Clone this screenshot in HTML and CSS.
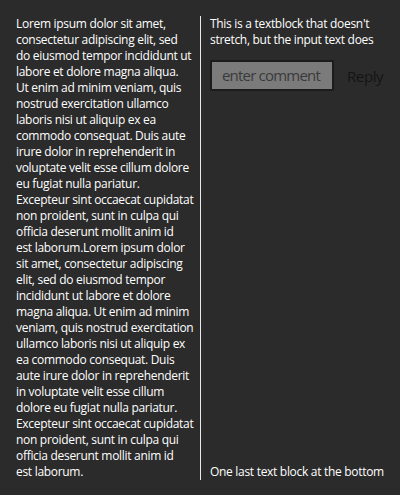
FILE: index.html
```html
<!DOCTYPE html>
<html>
<head>
<meta charset="utf-8">
<link rel="stylesheet" href="styles.css">
</head>
<body>
<div class="page">
  <div class="left">
    <p class="body-text lines">Lorem ipsum dolor sit amet,<br>consectetur adipiscing elit, sed<br>do eiusmod tempor incididunt ut<br>labore et dolore magna aliqua.<br>Ut enim ad minim veniam, quis<br>nostrud exercitation ullamco<br>laboris nisi ut aliquip ex ea<br>commodo consequat. Duis aute<br>irure dolor in reprehenderit in<br>voluptate velit esse cillum dolore<br>eu fugiat nulla pariatur.<br>Excepteur sint occaecat cupidatat<br>non proident, sunt in culpa qui<br>officia deserunt mollit anim id<br>est laborum.Lorem ipsum dolor<br>sit amet, consectetur adipiscing<br>elit, sed do eiusmod tempor<br>incididunt ut labore et dolore<br>magna aliqua. Ut enim ad minim<br>veniam, quis nostrud exercitation<br>ullamco laboris nisi ut aliquip ex<br>ea commodo consequat. Duis<br>aute irure dolor in reprehenderit<br>in voluptate velit esse cillum<br>dolore eu fugiat nulla pariatur.<br>Excepteur sint occaecat cupidatat<br>non proident, sunt in culpa qui<br>officia deserunt mollit anim id<br>est laborum.</p>
  </div>
  <div class="right">
    <div class="top">
      <p class="body-text lines">This is a textblock that doesn't<br>stretch, but the input text does</p>
      <div class="comment-row">
        <input class="comment" type="text" placeholder="enter comment">
        <span class="reply">Reply</span>
      </div>
    </div>
    <p class="body-text">One last text block at the bottom</p>
  </div>
</div>
</body>
</html>
```
FILE: styles.css
```css
html, body {
  margin: 0;
  padding: 0;
  background: #2b2b2b;
}
.page {
  box-sizing: border-box;
  height: 495px;
  padding: 16px 0;
  display: grid;
  grid-template-columns: 200px 1fr;
  font-family: "Open Sans", "Noto Sans", sans-serif;
}
.body-text {
  margin: 0;
  color: #ffffff;
  font-size: 12px;
  line-height: 16px;
  letter-spacing: -0.3px;
}
.lines {
  white-space: nowrap;
}
.left {
  padding: 0 4px 0 16px;
}
.right {
  border-left: 1px solid #e8e8e8;
  padding-left: 9px;
  display: flex;
  flex-direction: column;
  justify-content: space-between;
}
.comment-row {
  margin-top: 12px;
  display: flex;
  align-items: center;
}
.comment {
  box-sizing: border-box;
  width: 124px;
  height: 31px;
  border: 2px solid #1c1c1c;
  background: #7b7b7b;
  padding: 0 0 2px 10px;
  margin: 0;
  font-family: inherit;
  font-size: 15px;
  letter-spacing: -0.8px;
  color: #3a3a3a;
  outline: none;
}
.comment::placeholder {
  color: #3a3a3a;
  opacity: 1;
}
.reply {
  margin-left: 13px;
  font-size: 15px;
  letter-spacing: -0.4px;
  color: #141414;
}
```
